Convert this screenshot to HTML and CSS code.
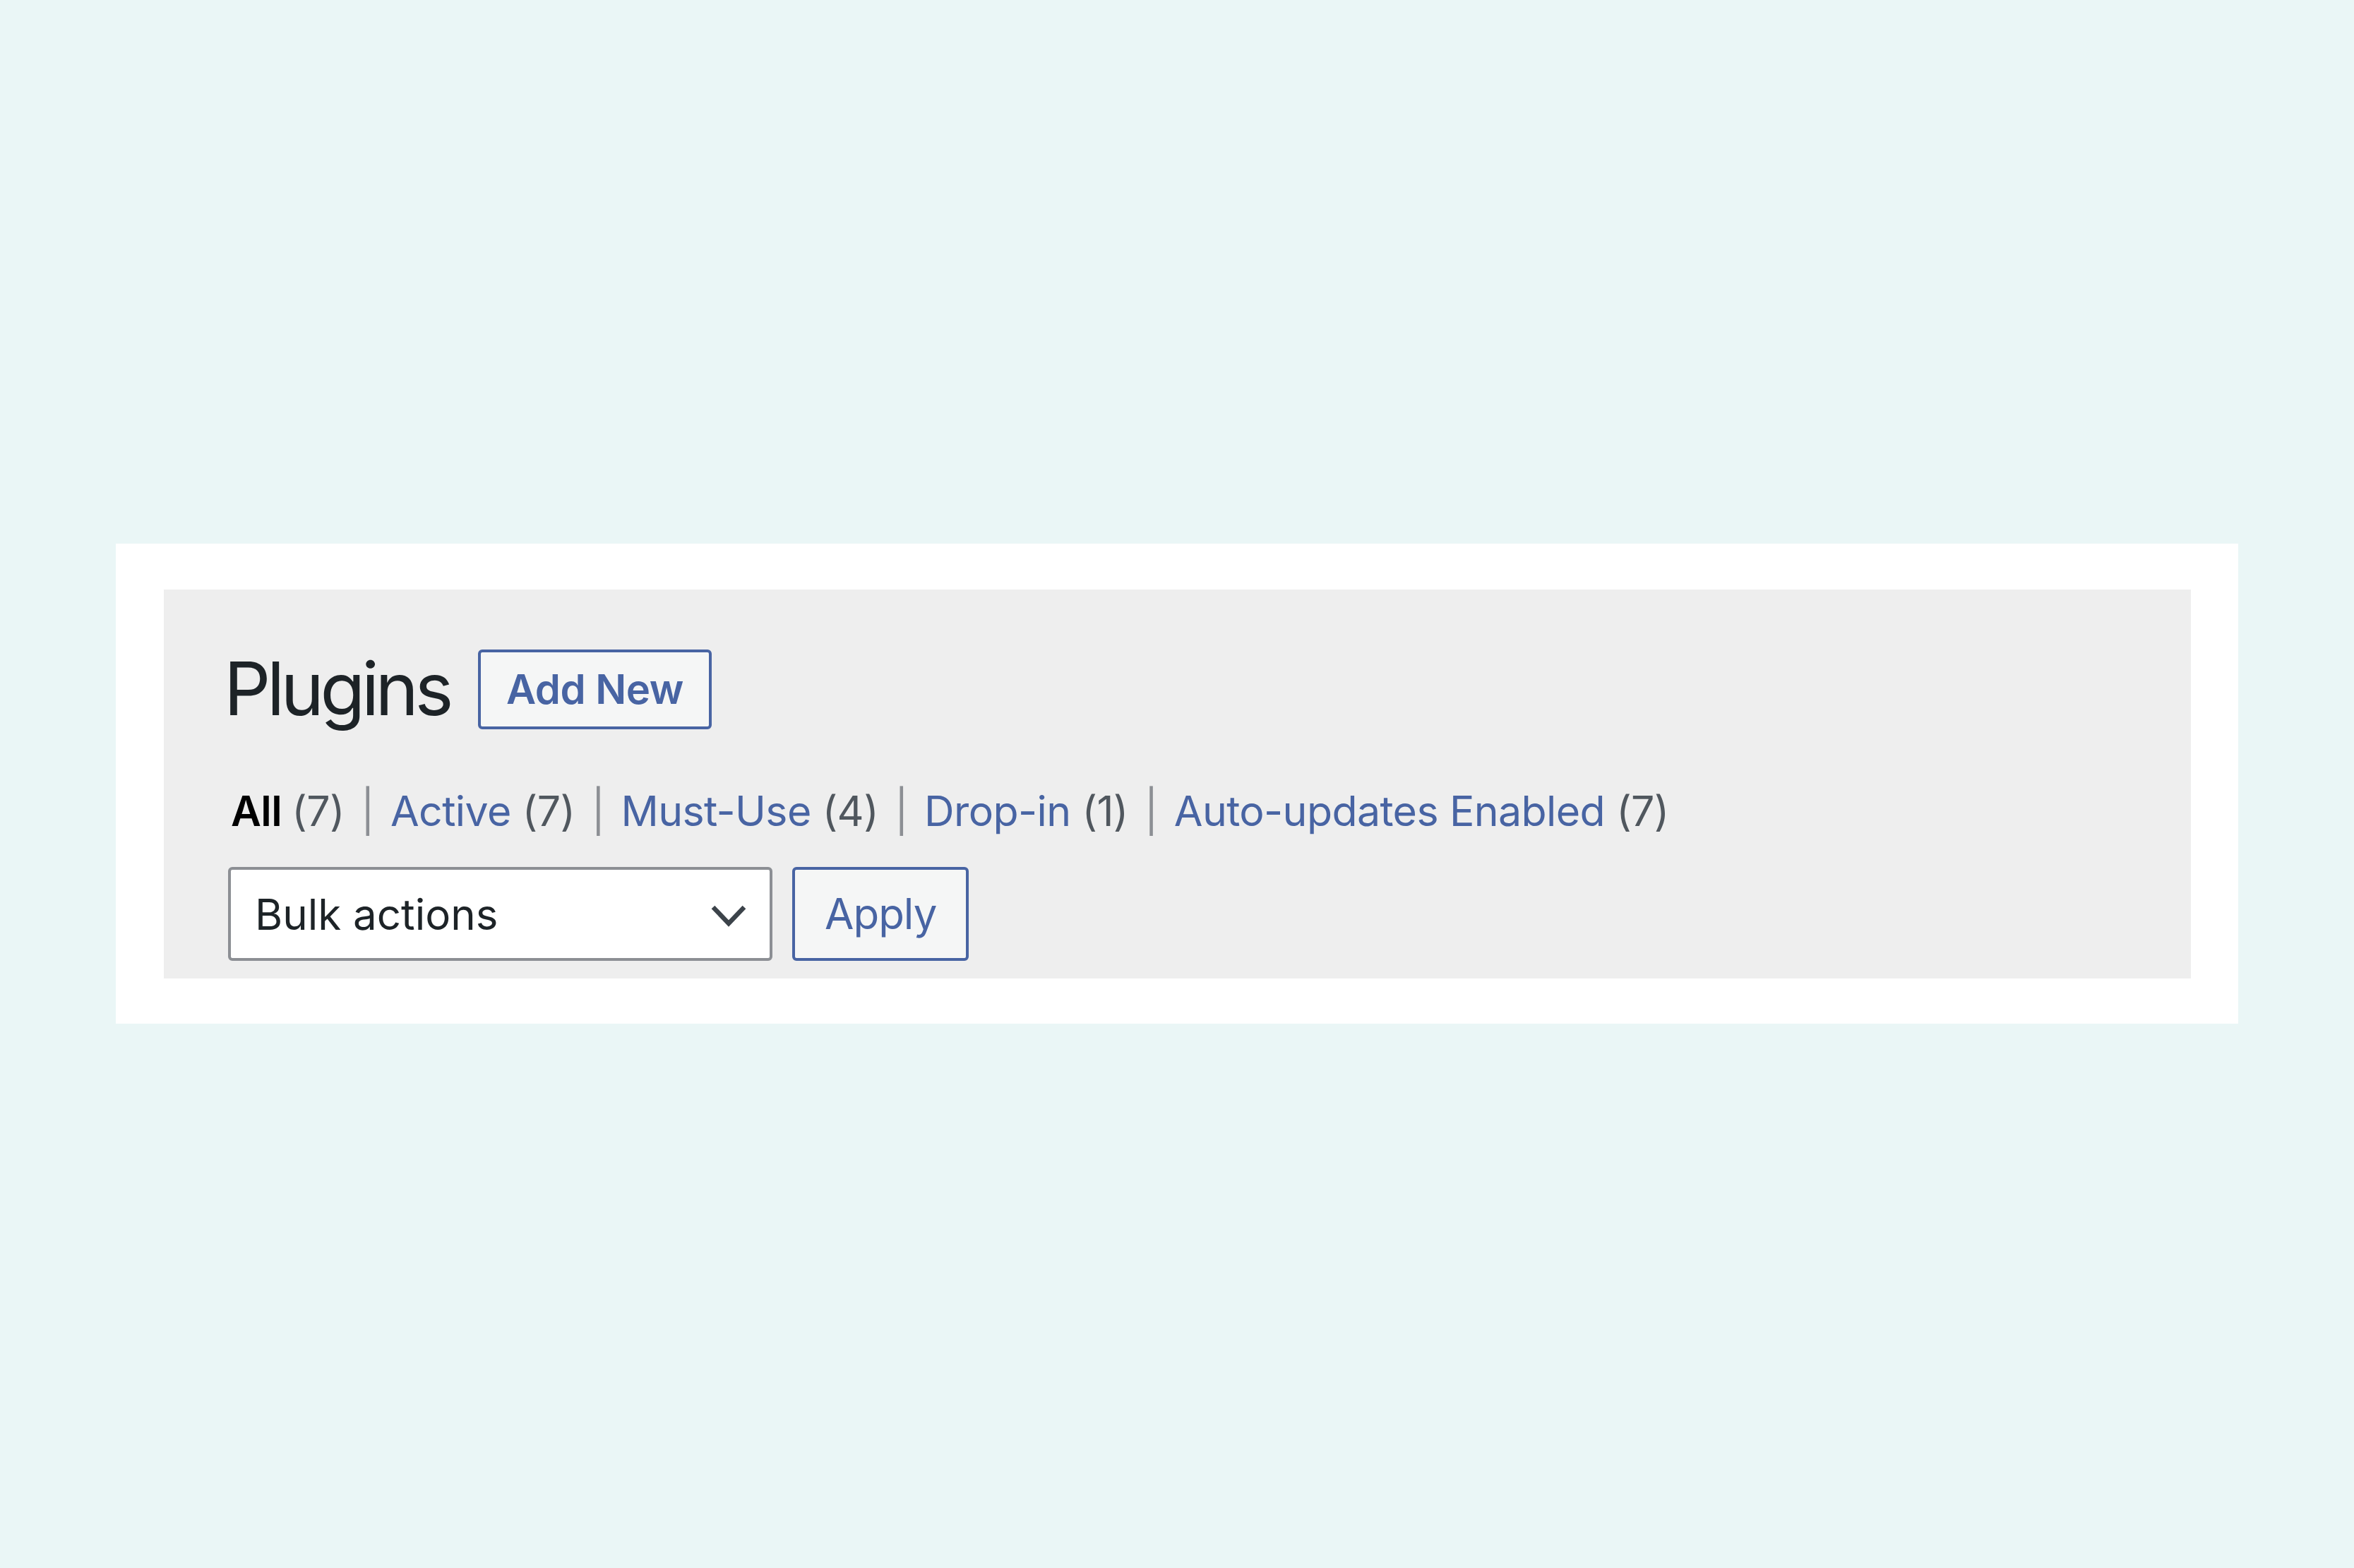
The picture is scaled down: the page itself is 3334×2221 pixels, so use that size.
FILE: index.html
```html
<!DOCTYPE html>
<html lang="en">
<head>
<meta charset="utf-8">
<title>Plugins</title>
<link rel="stylesheet" href="styles.css">
</head>
<body>
<div class="stage">
  <div class="frame">
    <div class="panel">
      <div class="title-row">
        <h1 class="page-title">Plugins</h1>
        <a class="btn add-new" href="#">Add New</a>
      </div>
      <ul class="filters">
        <li><a class="current" href="#">All <span class="count">(7)</span></a></li>
        <li class="sep">|</li>
        <li><a href="#">Active</a> <span class="count">(7)</span></li>
        <li class="sep">|</li>
        <li><a href="#">Must-Use</a> <span class="count">(4)</span></li>
        <li class="sep">|</li>
        <li><a href="#">Drop-in</a> <span class="count">(1)</span></li>
        <li class="sep">|</li>
        <li><a href="#">Auto-updates Enabled</a> <span class="count">(7)</span></li>
      </ul>
      <div class="actions">
        <div class="select">
          <span class="select-label">Bulk actions</span>
          <svg class="chevron" width="52" height="32" viewBox="0 0 52 32" aria-hidden="true">
            <polyline points="4,4 26,27 48,4" fill="none" stroke="#3c434a" stroke-width="6.5" stroke-linecap="butt" stroke-linejoin="miter"/>
          </svg>
        </div>
        <button class="btn apply" type="button">Apply</button>
      </div>
    </div>
  </div>
</div>
</body>
</html>
```

FILE: styles.css
```css
html, body {
  margin: 0;
  padding: 0;
}

body {
  background: #eaf6f6;
  font-family: Inter, "Liberation Sans", sans-serif;
  color: #1d2327;
}

.stage {
  padding: 770px 164px 0;
}

.frame {
  background: #ffffff;
  padding: 65px 67px 64px 68px;
}

.panel {
  background: #eeeeee;
  padding: 85px 91px 25px;
}

.title-row {
  display: flex;
  align-items: flex-start;
}

.page-title {
  margin: 3px 0 0 -6px;
  font-size: 104px;
  line-height: 104px;
  font-weight: 400;
  letter-spacing: -5.5px;
  color: #1d2327;
}

.btn {
  box-sizing: border-box;
  height: 113px;
  border: 4px solid #4864a3;
  border-radius: 6px;
  background: #f5f6f6;
  color: #4864a3;
  text-decoration: none;
  font-family: Inter, "Liberation Sans", sans-serif;
}

.add-new {
  margin-left: 40px;
  padding: 0 36px;
  font-size: 58px;
  font-weight: 600;
  line-height: 105px;
  letter-spacing: -0.5px;
}

.filters {
  list-style: none;
  margin: 76px 0 0 4px;
  padding: 0;
  display: flex;
  font-size: 59px;
  line-height: 80px;
  letter-spacing: -0.6px;
  white-space: pre;
}

.filters a {
  color: #4864a3;
  text-decoration: none;
}

.filters a.current {
  color: #000000;
  font-weight: 600;
}

.filters a.current .count {
  font-weight: 400;
}

.count {
  color: #50575e;
}

.sep {
  color: #8c8f94;
  margin: 0 23px;
}

.actions {
  display: flex;
  margin-top: 39px;
}

.select {
  box-sizing: border-box;
  width: 771px;
  height: 133px;
  border: 4px solid #8c8f94;
  border-radius: 6px;
  background: #ffffff;
  padding: 0 32px 0 34px;
  display: flex;
  align-items: center;
  justify-content: space-between;
}

.select-label {
  font-size: 60px;
  color: #1d2327;
}

.chevron {
  display: block;
  margin-top: 4px;
}

.apply {
  height: 133px;
  margin-left: 28px;
  padding: 0 42px;
  font-size: 60px;
  font-weight: 400;
  line-height: 125px;
  letter-spacing: -1px;
}
```
